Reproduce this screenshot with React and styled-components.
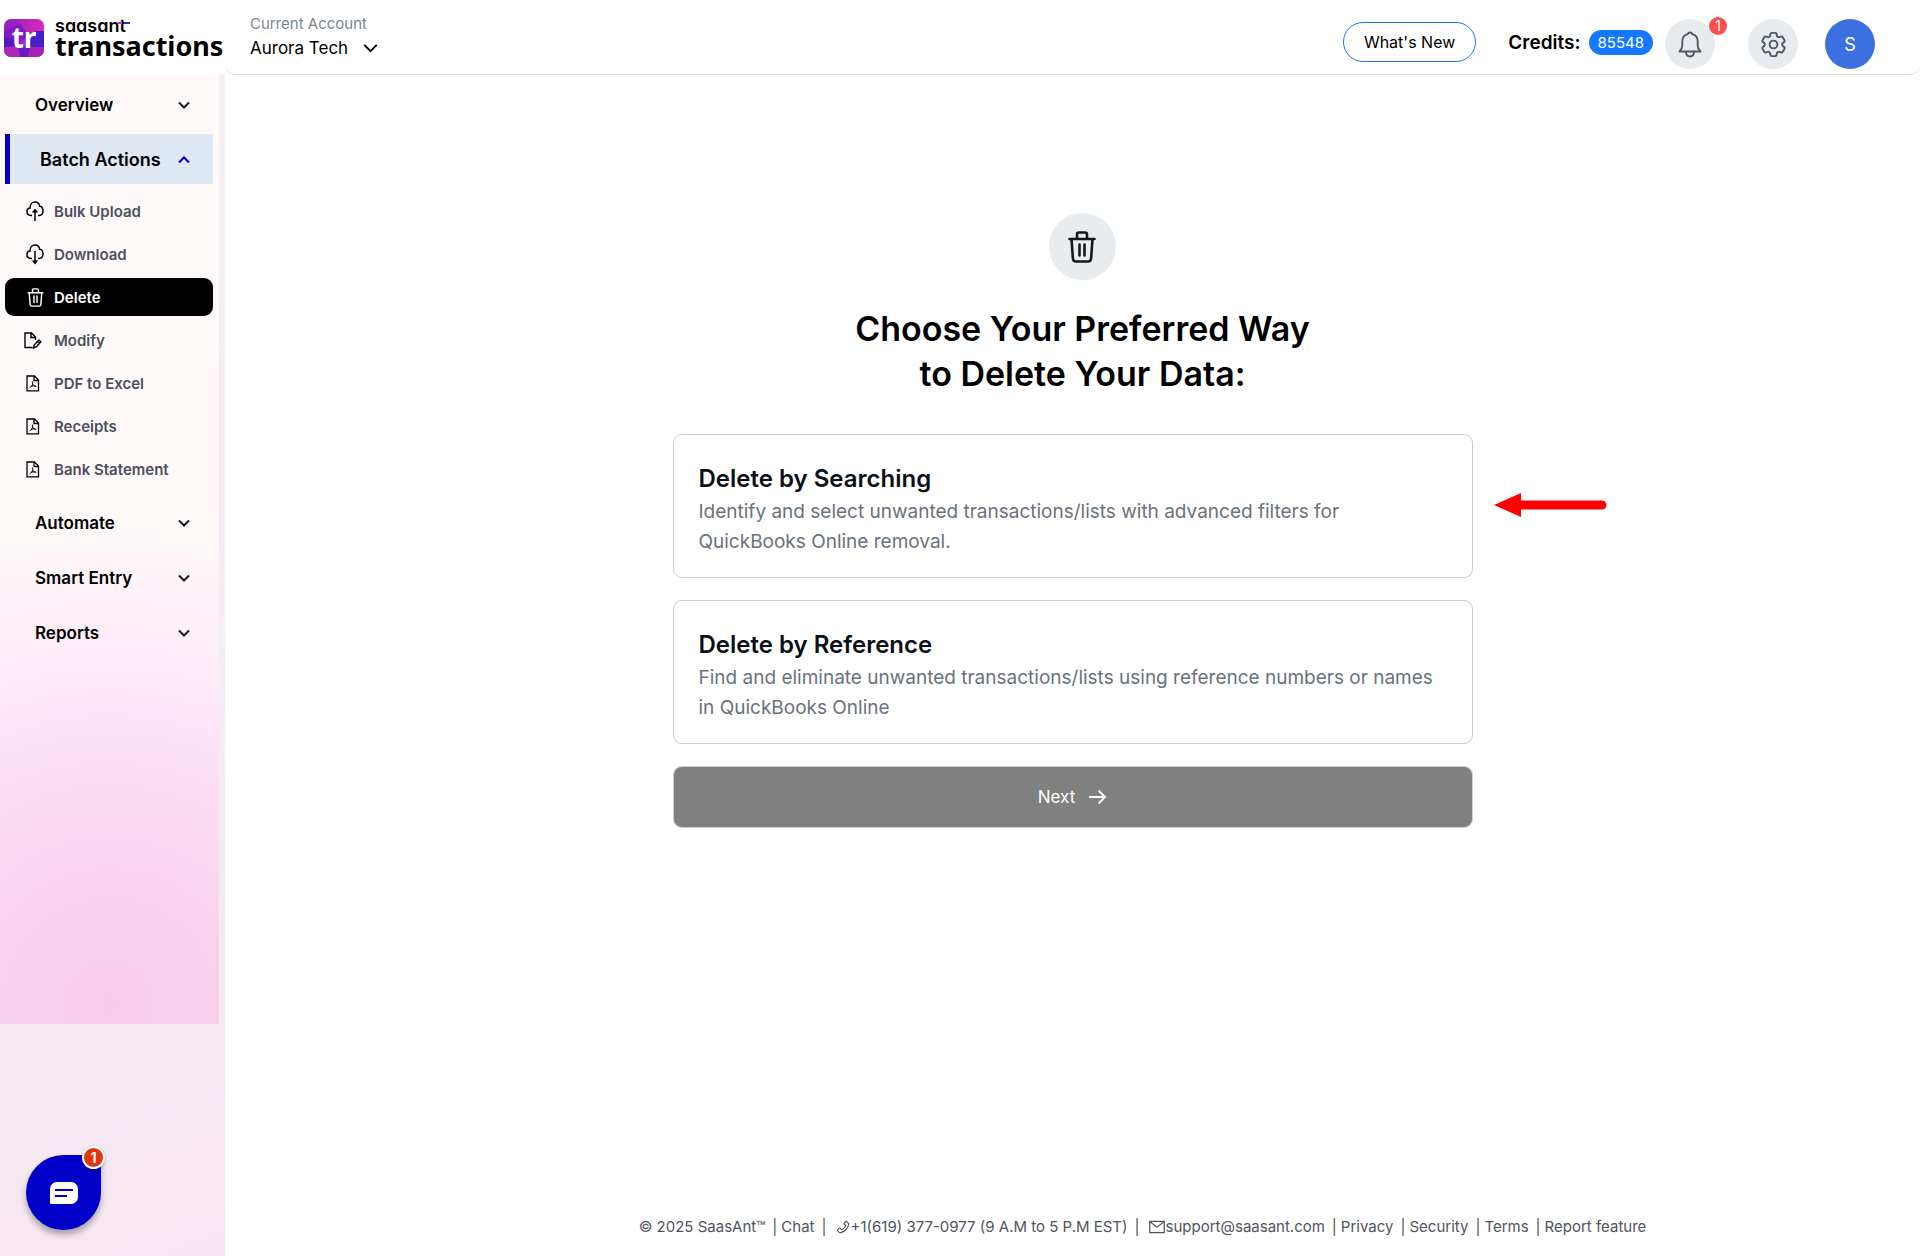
import React, { useState } from 'react';
import styled, { createGlobalStyle } from 'styled-components';
import { AiOutlineMail, AiOutlinePhone } from 'react-icons/ai';
import { HiOutlineCog6Tooth } from 'react-icons/hi2';

const batchItems = [
  { id: 'upload', label: 'Bulk Upload', icon: 'upload' },
  { id: 'download', label: 'Download', icon: 'download' },
  { id: 'delete', label: 'Delete', icon: 'trash' },
  { id: 'modify', label: 'Modify', icon: 'modify' },
  { id: 'pdf', label: 'PDF to Excel', icon: 'pdf' },
  { id: 'receipts', label: 'Receipts', icon: 'pdf' },
  { id: 'bank', label: 'Bank Statement', icon: 'pdf' },
];

const options = [
  {
    id: 'search',
    title: 'Delete by Searching',
    text: 'Identify and select unwanted transactions/lists with advanced filters for QuickBooks Online removal.',
  },
  {
    id: 'reference',
    title: 'Delete by Reference',
    text: 'Find and eliminate unwanted transactions/lists using reference numbers or names in QuickBooks Online',
  },
];

const CLOUD =
  'M6 14.5H5C2.8 14.5 1 13 1 10.6C1 8.5 2.4 7.2 4 7C4 3.5 6 1 9 1C11.7 1 13.3 2.8 13.7 5.2C15.8 5.4 17 7.6 17 9.8C17 12.6 15.4 14.4 13 14.5H12';

const TrashIcon = ({ width, height, stroke }) => (
  <svg width={width} height={height} viewBox="0 0 28 32" fill="none" stroke="currentColor" strokeWidth={stroke} strokeLinecap="round" strokeLinejoin="round">
    <path d="M1.5 8h25M9 8V3.5Q9 1.5 11 1.5h6Q19 1.5 19 3.5V8M3.5 8l1.4 19.5Q5.1 30.5 8 30.5h12Q22.9 30.5 23.1 27.5L24.5 8M11.5 13.5v11M16.5 13.5v11" />
  </svg>
);

const ItemIcon = ({ name }) => {
  if (name === 'trash') return <TrashIcon width={17} height={19} stroke={2.4} />;
  if (name === 'upload') {
    return (
      <svg width="18" height="21" viewBox="0 0 18 21" fill="none" stroke="currentColor" strokeWidth="1.5">
        <path d={CLOUD} />
        <path d="M9 20V9" />
        <path d="M5.8 11.5L9 7.5l3.2 4z" fill="currentColor" stroke="none" />
      </svg>
    );
  }
  if (name === 'download') {
    return (
      <svg width="18" height="21" viewBox="0 0 18 21" fill="none" stroke="currentColor" strokeWidth="1.5">
        <path d={CLOUD} />
        <path d="M9 7v11" />
        <path d="M5.8 16.5L9 20.5l3.2-4z" fill="currentColor" stroke="none" />
      </svg>
    );
  }
  if (name === 'modify') {
    return (
      <svg width="18" height="17" viewBox="2 0 18 17" overflow="visible" fill="none" stroke="currentColor" strokeWidth="1.4">
        <path d="M8.5 15.5H1V1h6.5L11.5 5v3M7 1v4.5h4.5" />
        <path d="M9.5 15.8l.8-3 4.6-4.9 2 1.9-4.6 5zM13.5 9.3l2 2" />
      </svg>
    );
  }
  return (
    <svg width="18" height="17" viewBox="2 0 18 17" fill="none" stroke="currentColor" strokeWidth="1.3">
      <path d="M3 1h7.5L14.5 5v10.8H3zM10 1v4.5h4.5" />
      <path d="M8.3 6.5c1 2 .3 4.5-2.5 6.3M8.6 8.8c.7 1.6 1.8 2.5 3.6 2.6M7 11.6c1.3-.7 2.8-1 4.5-.6" strokeWidth="1" />
    </svg>
  );
};

const Chevron = ({ up, size = 12 }) => (
  <svg width={size} height={size * 2 / 3} viewBox="0 0 12 8" fill="none" stroke="currentColor" strokeWidth={size > 12 ? 1.6 : 2}>
    <path d={up ? 'M1 6.5L6 1.5l5 5' : 'M1 1.5l5 5 5-5'} />
  </svg>
);

const BellIcon = () => (
  <svg width="24" height="27" viewBox="0 0 24 27" fill="none" stroke="currentColor" strokeWidth="1.9" strokeLinejoin="round">
    <path d="M1.5 20.5C3.6 18.5 4.3 17 4.3 14.5V10.5C4.3 6.6 6.6 4 9.8 3.2C10.2 1 13.8 1 14.2 3.2C17.4 4 19.7 6.6 19.7 10.5V14.5C19.7 17 20.4 18.5 22.5 20.5z" />
    <path d="M8 20.8C8 24 9.8 25.5 12 25.5S16 24 16 20.8" />
  </svg>
);

const LogoMark = () => (
  <svg width="40" height="38" viewBox="0 0 40 38" overflow="visible" role="img" aria-label="tr">
    <defs>
      <clipPath id="mark"><rect width="40" height="38" rx="7" /></clipPath>
      <linearGradient id="markFill" x1="0" y1="0" x2="1" y2="0">
        <stop offset="0" stopColor="#8d1fc4" />
        <stop offset="1" stopColor="#dc2bb4" />
      </linearGradient>
    </defs>
    <g clipPath="url(#mark)">
      <rect width="40" height="38" fill="url(#markFill)" />
      <path d="M0 13L16 4l8 12-12 12H0z" fill="#7a1cc2" />
      <path d="M0 18l14 4 6 7H0z" fill="#5a17bd" />
      <path d="M20 14l20-2v16H22z" fill="#4a20c8" />
      <path d="M31 12h9v14z" fill="#3a22cc" />
      <path d="M0 28l16-1 6 11H0z" fill="#b324b8" />
      <path d="M14 27h13l-3 11h-8z" fill="#6a1cc0" />
      <path d="M26 28h14v10H24z" fill="#a422b8" />
    </g>
    <text x="20" y="29" textAnchor="middle" fill="#fff" fontFamily="Noto Sans, sans-serif" fontWeight="700" fontSize="28">tr</text>
  </svg>
);

const Separator = () => <Bar>|</Bar>;

const App = () => {
  const [selected, setSelected] = useState(null);

  return (
    <Page>
      <GlobalStyle />
      <Side>
        <Brand href="#home">
          <LogoMark />
          <BrandText>
            <BrandSmall>saasant</BrandSmall>
            <BrandLarge>transactions</BrandLarge>
          </BrandText>
        </Brand>
        <SideBody>
          <SidePanel>
            <Group>Overview <Chevron /></Group>
            <Group $open>Batch Actions <Chevron up /></Group>
            <ItemList>
              {batchItems.map((item) => (
                <li key={item.id}>
                  <Item href={`#${item.id}`} $active={item.id === 'delete'}>
                    <IconBox><ItemIcon name={item.icon} /></IconBox>
                    {item.label}
                  </Item>
                </li>
              ))}
            </ItemList>
            <Group>Automate <Chevron /></Group>
            <Group>Smart Entry <Chevron /></Group>
            <Group>Reports <Chevron /></Group>
          </SidePanel>
        </SideBody>
      </Side>

      <Main>
        <Header>
          <Account>
            <AccountLabel>Current Account</AccountLabel>
            <AccountButton>Aurora Tech <Chevron size={15} /></AccountButton>
          </Account>
          <Tools>
            <Plan>
              <WhatsNew>What's New</WhatsNew>
              <Credits>
                Credits: <CreditCount>85548</CreditCount>
              </Credits>
            </Plan>
            <RoundButton aria-label="Notifications">
              <BellIcon />
              <BellCount>1</BellCount>
            </RoundButton>
            <RoundButton aria-label="Settings" $space={33}>
              <HiOutlineCog6Tooth size={31} />
            </RoundButton>
            <Avatar aria-label="Profile" $space={27}>S</Avatar>
          </Tools>
        </Header>

        <Content>
          <Intro>
            <IntroIcon><TrashIcon width={28} height={32} stroke={2.6} /></IntroIcon>
            <Title>Choose Your Preferred Way<br />to Delete Your Data:</Title>
          </Intro>
          <Choices>
            {options.map((option, index) => (
              <Choice key={option.id} $selected={selected === option.id} onClick={() => setSelected(option.id)}>
                <ChoiceTitle>{option.title}</ChoiceTitle>
                <ChoiceText>{option.text}</ChoiceText>
                {index === 0 && (
                  <Pointer width="114" height="24" viewBox="0 0 114 24" fill="red">
                    <path d="M0 12L27 0v7.5h81a4.5 4.5 0 0 1 0 9H27V24z" />
                  </Pointer>
                )}
              </Choice>
            ))}
            <NextButton>
              Next
              <svg width="18" height="16" viewBox="0 0 18 16" fill="none" stroke="currentColor" strokeWidth="2">
                <path d="M0 8h16M9.5 1.5L16 8l-6.5 6.5" />
              </svg>
            </NextButton>
          </Choices>
        </Content>

        <Footer>
          <span>© 2025 SaasAnt™</span>
          <Separator />
          <FooterLink href="#chat">Chat</FooterLink>
          <Separator />
          <FooterLink href="tel:+16193770977" $icon>
            <AiOutlinePhone size={16} />+1(619) 377-0977 (9 A.M to 5 P.M EST)
          </FooterLink>
          <Separator />
          <FooterLink href="mailto:support@saasant.com" $icon>
            <AiOutlineMail size={18} />support@saasant.com
          </FooterLink>
          <Separator />
          <FooterLink href="#privacy">Privacy</FooterLink>
          <Separator />
          <FooterLink href="#security">Security</FooterLink>
          <Separator />
          <FooterLink href="#terms">Terms</FooterLink>
          <Separator />
          <FooterLink href="#report">Report feature</FooterLink>
        </Footer>
      </Main>

      <ChatButton aria-label="Open chat">
        <svg width="28" height="22" viewBox="0 0 28 22">
          <path d="M7 0h14a7 7 0 0 1 7 7v8a7 7 0 0 1-7 7H1.5A1.5 1.5 0 0 1 0 20.5V7a7 7 0 0 1 7-7z" fill="#fff" />
          <path d="M5 8h18M5 14h12" stroke="#0000c8" strokeWidth="2" />
        </svg>
        <ChatCount>1</ChatCount>
      </ChatButton>
    </Page>
  );
};

const GlobalStyle = createGlobalStyle`
  * {
    box-sizing: border-box;
  }

  body {
    margin: 0;
    background: #fff;
    color: #000;
    font-family: Inter, 'Liberation Sans', sans-serif;
    font-size: 15px;
  }

  button {
    padding: 0;
    border: 0;
    background: none;
    color: inherit;
    font: inherit;
    cursor: pointer;
  }

  a {
    color: inherit;
    text-decoration: none;
  }
`;

const Page = styled.div`
  display: flex;
  min-height: 100vh;
`;

const Side = styled.aside`
  display: flex;
  flex-direction: column;
  flex: none;
  width: 225px;
`;

const Brand = styled.a`
  display: flex;
  align-items: center;
  gap: 11px;
  height: 74px;
  padding: 2px 0 0 4px;
`;

const BrandText = styled.span`
  display: flex;
  flex-direction: column;
`;

const BrandSmall = styled.span`
  position: relative;
  width: max-content;
  font-size: 18px;
  font-weight: 600;
  line-height: 16px;
  font-feature-settings: 'cv11';

  /* two-tone crossbar of the final t */
  &::after {
    content: '';
    position: absolute;
    top: 4px;
    right: -4px;
    width: 12px;
    height: 2px;
    background: linear-gradient(90deg, #e02bb4 4px, #000 4px, #000 6px, #1f2fd8 6px);
  }
`;

const BrandLarge = styled.span`
  font-family: 'Noto Sans', sans-serif;
  font-size: 27px;
  font-weight: 700;
  line-height: 24px;
`;

const SideBody = styled.div`
  display: flex;
  flex: 1;
  padding: 0 6px 232px 0;
  background: linear-gradient(160deg, #f3eff3 20%, #f5ebf2 60%, #f7e7f2);
`;

const SidePanel = styled.nav`
  flex: 1;
  padding: 5px 6px 5px 5px;
  background: radial-gradient(
    circle 480px at 50% 98%,
    #f8c9eb 0%,
    #f9cfed 16%,
    #fad9f1 38%,
    #fde4f6 62%,
    #fef0f8 82%,
    #fff9f9 100%
  );
`;

const Group = styled.button`
  display: flex;
  align-items: center;
  justify-content: space-between;
  width: 100%;
  height: 50px;
  margin-bottom: 5px;
  padding: 1px 23px 0 ${(props) => (props.$open ? 30 : 25)}px;
  border-left: 5px solid ${(props) => (props.$open ? '#0000cc' : 'transparent')};
  background: ${(props) => (props.$open ? '#dfe7f3' : 'none')};
  font-size: ${(props) => (props.$open ? 18 : 17)}px;
  font-weight: 600;

  svg {
    color: ${(props) => (props.$open ? '#0000cc' : '#1a1a1a')};
  }
`;

const ItemList = styled.ul`
  display: flex;
  flex-direction: column;
  gap: 5px;
  margin: 8px 0 9px;
  padding: 0;
  list-style: none;
`;

const Item = styled.a`
  display: flex;
  align-items: center;
  height: 38px;
  padding-left: 20px;
  border-radius: 9px;
  background: ${(props) => (props.$active ? '#000' : 'none')};
  color: ${(props) => (props.$active ? '#fff' : '#4b4f5c')};
  font-size: 15px;
  font-weight: 600;

  svg {
    color: ${(props) => (props.$active ? '#fff' : '#000')};
  }
`;

const IconBox = styled.span`
  display: flex;
  justify-content: center;
  width: 20px;
  margin-right: 9px;
`;

const Main = styled.div`
  display: flex;
  flex-direction: column;
  flex: 1;
  min-width: 0;
`;

const Header = styled.header`
  display: flex;
  align-items: flex-start;
  justify-content: space-between;
  height: 75px;
  padding: 12px 45px 0 25px;
  border-bottom: 1px solid #dcdcdc;
  border-radius: 0 0 10px 10px;
`;

const Account = styled.div`
  display: flex;
  flex-direction: column;
  line-height: 24px;
`;

const AccountLabel = styled.span`
  color: #7a8691;
  font-size: 15px;
`;

const AccountButton = styled.button`
  display: flex;
  align-items: center;
  gap: 15px;
  font-size: 17px;
`;

const Tools = styled.div`
  display: flex;
  align-items: center;
  padding-top: 7px;
`;

const Plan = styled.div`
  display: flex;
  align-items: center;
  gap: 32px;
  padding-bottom: 4px;
  margin-right: 12px;
`;

const WhatsNew = styled.button`
  height: 40px;
  padding: 0 20px;
  border: 1px solid #1677ff;
  border-radius: 20px;
  font-size: 16px;
`;

const Credits = styled.span`
  display: flex;
  align-items: center;
  gap: 8px;
  font-size: 19px;
  font-weight: 600;
`;

const CreditCount = styled.span`
  padding: 0 9px;
  border-radius: 13px;
  background: #1677ff;
  color: #fff;
  font-size: 15px;
  font-weight: 400;
  line-height: 25px;
`;

const RoundButton = styled.button`
  position: relative;
  display: flex;
  align-items: center;
  justify-content: center;
  width: 50px;
  height: 50px;
  margin-left: ${(props) => props.$space || 0}px;
  border-radius: 50%;
  background: #e8ebee;
  color: #4f5863;
`;

const Avatar = styled(RoundButton)`
  background: #3c6fe0;
  color: #fff;
  font-size: 18px;
`;

const BellCount = styled.span`
  position: absolute;
  top: -2px;
  right: -12px;
  width: 18px;
  border-radius: 9px;
  background: #ff4d4f;
  color: #fff;
  font-size: 14px;
  line-height: 18px;
`;

const Content = styled.main`
  display: flex;
  flex-direction: column;
  align-items: center;
  padding: 138px 24px 24px;
`;

const Intro = styled.div`
  display: flex;
  flex-direction: column;
  align-items: center;
  gap: 26px;
  padding-left: 20px;
`;

const IntroIcon = styled.span`
  display: flex;
  align-items: center;
  justify-content: center;
  width: 67px;
  height: 67px;
  border-radius: 50%;
  background: #e9ecef;
  color: #14171c;
`;

const Title = styled.h1`
  margin: 0;
  font-size: 34px;
  font-weight: 600;
  line-height: 45px;
  text-align: center;
`;

const Choices = styled.div`
  display: flex;
  flex-direction: column;
  gap: 22px;
  width: 100%;
  max-width: 800px;
  margin-top: 38px;
`;

const Choice = styled.button`
  position: relative;
  display: flex;
  flex-direction: column;
  gap: 3px;
  padding: 29px 25px 20px;
  border: 1px solid ${(props) => (props.$selected ? '#1677ff' : '#c8ced5')};
  border-radius: 9px;
  text-align: left;
`;

const ChoiceTitle = styled.span`
  color: #0b0f17;
  font-size: 24px;
  font-weight: 600;
  line-height: 30px;
`;

const ChoiceText = styled.span`
  color: #6a727c;
  font-size: 19px;
  line-height: 30px;
`;

/* sits outside the card, pointing at it */
const Pointer = styled.svg`
  position: absolute;
  top: 58px;
  left: calc(100% + 22px);
`;

const NextButton = styled.button`
  display: flex;
  align-items: center;
  justify-content: center;
  gap: 14px;
  height: 62px;
  border: 1px solid #d0d0d0;
  border-radius: 9px;
  background: #808080;
  color: #fff;
  font-size: 17px;
`;

const Footer = styled.footer`
  display: flex;
  align-items: center;
  justify-content: center;
  margin-top: auto;
  padding: 0 0 17px 140px;
  color: #50545c;
  font-size: 15px;
  line-height: 24px;
  white-space: nowrap;
`;

const Bar = styled.span`
  padding: 0 4px 0 7px;
`;

const FooterLink = styled.a`
  display: flex;
  align-items: center;
  padding-left: ${(props) => (props.$icon ? 4 : 0)}px;
`;

const ChatButton = styled.button`
  position: fixed;
  bottom: 26px;
  left: 26px;
  display: flex;
  align-items: center;
  justify-content: center;
  width: 75px;
  height: 75px;
  border-radius: 50% 0 50% 50%;
  background: #0000c8;
  box-shadow: 0 5px 6px rgba(0, 0, 0, 0.3);
`;

const ChatCount = styled.span`
  position: absolute;
  top: -9px;
  right: -4px;
  width: 23px;
  border: 2px solid #fff;
  border-radius: 50%;
  background: #e0350d;
  color: #fff;
  font-size: 14px;
  font-weight: 700;
  line-height: 19px;
  box-shadow: 0 1px 3px rgba(0, 0, 0, 0.3);
`;

export default App;
